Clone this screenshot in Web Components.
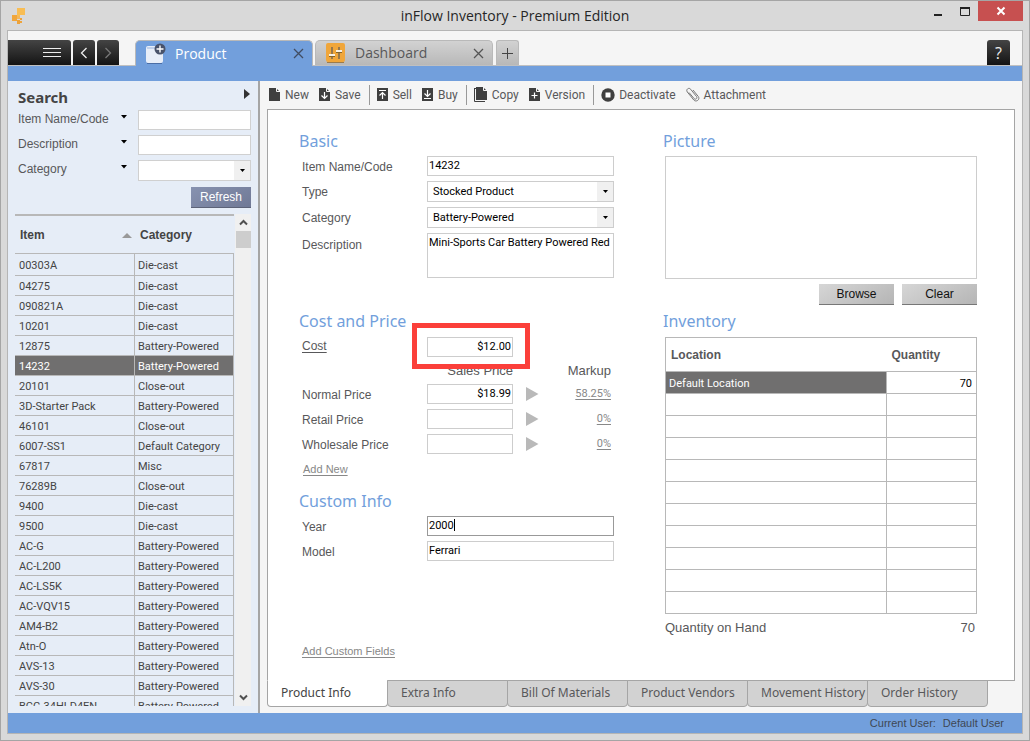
<!DOCTYPE html>
<html lang="en">
<head>
<meta charset="utf-8">
<title>inFlow Inventory - Premium Edition</title>
<style>
  html, body { margin: 0; height: 100%; }
  body {
    --blue: #729fdc;
    --line: #b8b8b8;
    --edge: #a5a5a5;
    --field: #cdcdcd;
    --ink: #58585a;
    --ui: "Open Sans", "Noto Sans", sans-serif;
    --head: "Noto Sans", "Open Sans", sans-serif;
    --data: Roboto, "Liberation Sans", sans-serif;
    font: 12px/16px "Liberation Sans", Arial, sans-serif;
    color: var(--ink);
  }
</style>
</head>
<body>
<app-window>
  <title-bar slot="title">inFlow Inventory - Premium Edition</title-bar>
  <tab-strip slot="tabs"></tab-strip>
  <search-panel slot="side"><item-list></item-list></search-panel>
  <tool-bar></tool-bar>
  <product-form></product-form>
  <page-tabs></page-tabs>
  <status-bar slot="status"><span>Current User:</span><span>Default User</span></status-bar>
</app-window>

<script>
const define = (name, html, setup) => {
  const template = document.createElement('template');
  template.innerHTML = html;
  customElements.define(name, class extends HTMLElement {
    constructor() {
      super();
      this.attachShadow({ mode: 'open' }).append(template.content.cloneNode(true));
    }
    connectedCallback() {
      if (setup && !this.ready) { this.ready = true; setup(this, this.shadowRoot); }
    }
  });
};
const reset = `*{box-sizing:border-box} button,input,select,textarea{font:inherit;color:inherit;margin:0;border-radius:0;outline:none} button{border:0;padding:0;background:none} svg{display:block}`;

/* ---- window frame ---- */
define('app-window', `<style>${reset}
  :host{display:flex;flex-direction:column;height:100vh;box-sizing:border-box;background:#d9d9d9;border:1px solid var(--edge);padding:0 6px 6px;overflow:hidden}
  .frame{flex:1;min-height:0;display:flex;flex-direction:column;border:1px solid #b5b5b5;background:#f5f5f5}
  .body{flex:1;min-height:0;display:flex}
  main{flex:1;min-width:0;display:flex;flex-direction:column;padding:0 7px 6px}
  </style>
  <slot name="title"></slot>
  <div class="frame"><slot name="tabs"></slot>
    <div class="body"><slot name="side"></slot><main><slot></slot></main></div>
    <slot name="status"></slot></div>`);

define('title-bar', `<style>${reset}
  :host{display:grid;grid-template-columns:1fr auto 1fr;height:29px;align-items:center;font:14px/20px var(--ui);color:#262626;margin-right:-6px}
  .logo{margin-left:4px}
  h1{font:inherit;margin:0 6px 0 0}
  .win{display:flex;justify-self:end;align-self:start;padding-right:6px}
  .win button{width:27px;height:20px;display:grid;place-items:center}
  .win .close{width:45px;background:#c75050}
  </style>
  <svg class="logo" width="16" height="18" viewBox="0 0 16 18"><path d="M6 1h8v7H9v2H6z" fill="#f8bd54"/><path d="M1 8h5v6H1z" fill="#f0a63c"/><path d="M6 9h3v3H6z" fill="#f4b75a"/><path d="M9 11h2v2H9zM6 13h3v4H6zM9 14h2v2H9z" fill="#eda33b"/></svg>
  <h1><slot></slot></h1>
  <div class="win">
    <button aria-label="Minimize"><svg width="10" height="10"><path d="M1 8h8v2H1z" fill="#222"/></svg></button>
    <button aria-label="Maximize"><svg width="10" height="10"><path d="M.5 2h9v7.500h-9z M0 2h10" fill="none" stroke="#222"/><path d="M0 1h10v2H0z" fill="#222"/></svg></button>
    <button class="close" aria-label="Close"><svg width="10" height="10"><path d="M1.500 1.500l7 7m0-7l-7 7" stroke="#fff" stroke-width="2"/></svg></button>
  </div>`);

/* ---- top tabs ---- */
define('tab-strip', `<style>${reset}
  :host{display:block;border-bottom:15px solid var(--blue)}
  nav{display:flex;align-items:flex-end;height:35px;padding:0 12px 0 0;border-bottom:1px solid #c0c0c0}
  button{display:grid;place-items:center;height:25px}
  .dark{background:linear-gradient(#444,#141414);width:22px;margin-right:2px;border-radius:3px 3px 0 0}
  .menu{width:63px;border-radius:0 3px 0 0;justify-items:end;padding-right:10px}
  .tab{display:flex;align-items:center;width:178px;height:25px;padding:0 8px 0 10px;font:14px/20px var(--ui);border-radius:5px 5px 0 0;border:1px solid #b9b9b9;border-bottom:0;background:linear-gradient(#d2d2d2,#b8b8b8);margin-right:3px}
  .tab a{flex:1;margin-left:10px;color:inherit;text-decoration:none}
  .tab.on{background:var(--blue);color:#fff;margin:0 2px -1px 14px;height:26px}
  .tab.on a{margin-left:9px}
  .tab button{height:12px;width:12px}
  .plus{width:23px;border:1px solid #b9b9b9;border-bottom:0;border-radius:3px 3px 0 0;background:linear-gradient(#d2d2d2,#b8b8b8)}
  .help{margin:0 0 0 auto;width:23px;color:#eee;font:16px/24px var(--ui)}
  </style>
  <nav>
    <button class="dark menu" aria-label="Menu"><svg width="18" height="11"><path d="M0 1.500h18M0 5.500h18M0 9.500h18" stroke="#eee"/></svg></button>
    <button class="dark" aria-label="Back"><svg width="8" height="12"><path d="M6.500 1l-5 5 5 5" fill="none" stroke="#eee" stroke-width="1.300"/></svg></button>
    <button class="dark" aria-label="Forward"><svg width="8" height="12"><path d="M1.500 1l5 5-5 5" fill="none" stroke="#777" stroke-width="1.300"/></svg></button>
    <div class="tab on">
      <svg width="20" height="21" viewBox="0 0 20 21"><path d="M0 5q0-2 2-2h15v15q0 2-2 2H2q-2 0-2-2z" fill="#e8eef8"/><path d="M1 5h11" stroke="#9bb4dc"/><path d="M1 20.500h15" stroke="#4b6ea6"/><circle cx="14" cy="6" r="5.500" fill="#49536b"/><path d="M14 2.500v7M10.500 6h7" stroke="#fff" stroke-width="1.400"/></svg>
      <a href="#product">Product</a>
      <button aria-label="Close Product"><svg width="11" height="11"><path d="M1 1l9 9m0-9l-9 9" stroke="#414d62" stroke-width="1.300"/></svg></button>
    </div>
    <div class="tab">
      <svg width="19" height="20" viewBox="0 0 19 20"><rect width="19" height="19" rx="2" fill="#f0a63a"/><path d="M1 19.500h17" stroke="#9b7b4c"/><path d="M6 4v12M13 4v12" stroke="#7a6a50" stroke-width="1.500"/><path d="M3 11h6v2H3zM10 7h6v2h-6z" fill="#f7f0e4"/><path d="M3 13.500h6M10 9.500h6" stroke="#846427"/></svg>
      <a href="#dashboard">Dashboard</a>
      <button aria-label="Close Dashboard"><svg width="11" height="11"><path d="M1 1l9 9m0-9l-9 9" stroke="#555" stroke-width="1.300"/></svg></button>
    </div>
    <button class="plus" aria-label="New tab"><svg width="11" height="11"><path d="M5.500 0v11M0 5.500h11" stroke="#444"/></svg></button>
    <button class="dark help" aria-label="Help">?</button>
  </nav>`);

/* ---- sidebar ---- */
define('search-panel', `<style>${reset}
  :host{display:flex;flex-direction:column;flex:0 0 252px;box-sizing:border-box;background:#e6edf7;border-right:2px solid var(--edge);padding:6px 7px 7px 7px}
  header{display:flex;align-items:center;justify-content:space-between;height:20px;padding-left:3px;color:#444}
  h2{margin:0;font:bold 15px/20px var(--head)}
  header button{margin:-7px 1px 0 0}
  form{display:grid;grid-template-columns:103px 17px 113px;row-gap:5px;padding-left:3px;margin-top:3px}
  label{line-height:18px}
  .drop{margin-top:5px;height:4px;width:7px;display:block}
  input,.sel{height:20px;width:100%;border:1px solid #d0d0d0;background:#fff}
  .sel{height:21px;display:grid}
  .sel>*{grid-area:1/1}
  select{appearance:none;border:0;background:none;width:100%;padding:0}
  .sel i{justify-self:end;width:16px;background:#f0f0f0;display:grid;place-items:center;pointer-events:none}
  .go{grid-column:3;justify-self:end;width:60px;height:21px;margin-top:1px;background:linear-gradient(150deg,#8792b0,#707996);border-bottom:1px solid #5d6378;color:#fff}
  ::slotted(*){flex:1;min-height:0;margin-top:6px}
  </style>
  <header><h2>Search</h2><button aria-label="Collapse"><svg width="6" height="10"><path d="M0 0l6 5-6 5z" fill="#333"/></svg></button></header>
  <form>
    <label for="n">Item Name/Code</label><button type="button" class="drop" aria-label="Name options"><svg width="6" height="4"><path d="M0 0h6L3 3.500z"/></svg></button><input id="n">
    <label for="d">Description</label><button type="button" class="drop" aria-label="Description options"><svg width="6" height="4"><path d="M0 0h6L3 3.500z"/></svg></button><input id="d">
    <label for="c">Category</label><button type="button" class="drop" aria-label="Category options"><svg width="6" height="4"><path d="M0 0h6L3 3.500z"/></svg></button>
    <div class="sel"><select id="c"><option></option></select><i><svg width="5" height="3"><path d="M0 0h5L2.500 3z"/></svg></i></div>
    <button type="button" class="go">Refresh</button>
  </form>
  <slot></slot>`);

define('item-list', `<style>${reset}
  :host{display:flex;overflow:hidden;color:#444}
  .view{flex:1;overflow:hidden;border-top:2px solid var(--line)}
  table{width:100%;border-collapse:separate;border-spacing:0;table-layout:fixed}
  th{height:38px;text-align:left;padding:0 5px;border-bottom:1px solid var(--line)}
  th svg{float:right;margin:6px -2px 0 0}
  td{height:20px;font:11px/16px var(--data);padding:2px 3px 0;border-right:1px solid var(--line);border-bottom:1px solid var(--line);white-space:nowrap}
  td:first-child{padding-left:4px}
  tr:first-child td{height:22px}
  .on td{background:#706f6f;color:#fff}
  .bar{width:16px;margin-left:1px;background:#f0f0f0;display:flex;flex-direction:column;align-items:center}
  .bar button{height:17px;width:16px;display:grid;place-items:center}
  .thumb{width:15px;height:17px;background:#cdcdcd;margin-bottom:auto}
  </style>
  <div class="view"><table><colgroup><col style="width:120px"><col></colgroup>
    <thead><tr><th>Item <svg width="10" height="5"><path d="M5 0l5 5H0z" fill="#999"/></svg></th><th>Category</th></tr></thead><tbody></tbody></table></div>
  <div class="bar"><button aria-label="Scroll up"><svg width="9" height="7"><path d="M1 5.500L4.500 2 8 5.500" fill="none" stroke="#505050" stroke-width="2"/></svg></button><div class="thumb"></div>
  <button aria-label="Scroll down"><svg width="9" height="7"><path d="M1 1.500L4.500 5 8 1.500" fill="none" stroke="#505050" stroke-width="2"/></svg></button></div>`,
  (host, root) => {
    const B = 'Battery-Powered', D = 'Die-cast', C = 'Close-out';
    const items = [['00303A', D], ['04275', D], ['090821A', D], ['10201', D], ['12875', B], ['14232', B], ['20101', C],
      ['3D-Starter Pack', B], ['46101', C], ['6007-SS1', 'Default Category'], ['67817', 'Misc'], ['76289B', C], ['9400', D],
      ['9500', D], ['AC-G', B], ['AC-L200', B], ['AC-LS5K', B], ['AC-VQV15', B], ['AM4-B2', B], ['Atn-O', B], ['AVS-13', B],
      ['AVS-30', B], ['BCG-34HLD4EN', B]];
    root.querySelector('tbody').innerHTML = items.map(([n, c]) =>
      `<tr${n === '14232' ? ' class="on"' : ''}><td>${n}</td><td>${c}</td></tr>`).join('');
  });

/* ---- toolbar ---- */
const page = 'M0 0h7l4 4v9H0z', fold = '<path d="M7.500 0v3.500H11" fill="none" stroke="#f5f5f5"/>';
const icons = {
  New: `<svg width="12" height="13"><path d="${page}" fill="#3f3f3f"/>${fold}</svg>`,
  Save: `<svg width="12" height="13"><path d="${page}" fill="#3f3f3f"/>${fold}<path d="M5.500 4v6M2.500 7.500l3 3 3-3" fill="none" stroke="#fff" stroke-width="1.200"/></svg>`,
  Sell: `<svg width="12" height="13"><path d="M0 0h11v13H0z" fill="#3f3f3f"/><path d="M2 2.500h7M5.500 5v6M2.500 7.500l3-3 3 3" fill="none" stroke="#fff" stroke-width="1.200"/></svg>`,
  Buy: `<svg width="12" height="13"><path d="M0 0h11v13H0z" fill="#3f3f3f"/><path d="M2 10.500h7M5.500 2v6M2.500 5.500l3 3 3-3" fill="none" stroke="#fff" stroke-width="1.200"/></svg>`,
  Copy: `<svg width="14" height="15"><path d="M.5 1v13.500H11M.5 1.500H3" fill="none" stroke="#3f3f3f"/><path d="M2 0h7l4 4v9H2z" fill="#3f3f3f"/><path d="M9.500 0v3.500H13" fill="none" stroke="#f5f5f5"/></svg>`,
  Version: `<svg width="12" height="13"><path d="${page}" fill="#3f3f3f"/>${fold}<path d="M5.500 4.500v6M2.500 7.500h6" stroke="#fff" stroke-width="1.200"/></svg>`,
  Deactivate: `<svg width="14" height="14"><circle cx="7" cy="7" r="6.700" fill="#3f3f3f"/><rect x="4.500" y="4.500" width="5" height="5" fill="#fff"/></svg>`,
  Attachment: `<svg width="14" height="15" viewBox="0 0 14 15"><path d="M3 5.500l5 6c1.500 1.700 3.900-.2 2.500-2L4.700 2.300C3-.1-.6 2.500 1.300 5l6.500 8c2.200 2.500 6.700-.3 4.500-3.500L7 3" fill="none" stroke="#777"/></svg>`
};
define('tool-bar', `<style>${reset}
  :host{display:flex;align-items:center;height:28px;font:12px/16px var(--data);padding-left:2px}
  button{display:flex;align-items:center;gap:4px;margin-right:10px}
  button svg{margin-top:-1px}
  .end{margin-right:8px}
  i{width:1px;height:20px;background:#999;margin-right:7px}
  </style>`, (host, root) => {
    const cut = ['Save', 'Buy', 'Version'];
    root.innerHTML += Object.keys(icons).map(n =>
      `<button class="${cut.includes(n) ? 'end' : ''}">${icons[n]}${n}</button>${cut.includes(n) ? '<i></i>' : ''}`).join('');
  });

/* ---- form pieces ---- */
define('form-section', `<style>
  :host{display:block}
  h2{margin:0;font:16px/20px var(--head);color:var(--blue)}
  div{display:grid;row-gap:5px;margin-top:var(--head-gap,5px)}
  </style><h2></h2><div><slot></slot></div>`,
  (host, root) => { root.querySelector('h2').textContent = host.getAttribute('heading'); });

/* kind: text | select | area | money */
define('form-field', `<style>${reset}
  :host{display:grid;grid-template-columns:128px minmax(0,1fr);color:var(--ink)}
  label{padding:2px 0 0 3px;line-height:18px}
  .link{text-decoration:underline;text-underline-offset:2px;padding-top:0}
  .box{position:relative;display:grid;font:11px/16px var(--data);color:#000}
  .box>*{grid-area:1/1}
  input,textarea,select{width:100%;height:20px;padding:0 1px 2px;border:1px solid var(--field);background:#fff}
  textarea{height:45px;resize:none;padding-top:1px;line-height:16px;display:block}
  select{height:21px;appearance:none;padding:0 5px}
  .arrow{justify-self:end;width:16px;margin:1px;background:#f0f0f0;display:grid;place-items:center;pointer-events:none}
  :host([active]) input{border-color:#999}
  .caret{position:absolute;left:27px;top:3px;width:1px;height:12px;background:#000}
  :host([kind=money]) .wrap{display:grid;grid-template-columns:86px 26px 1fr;align-items:center;padding-right:3px}
  :host([kind=money]) input{text-align:right}
  .tri{margin-left:13px}
  a{justify-self:end;color:#888;font:11px/16px var(--data);text-underline-offset:2px}
  .ring{position:absolute;inset:-14px -17px -12px -15px;border:5px solid #fb3f3a;pointer-events:none;z-index:1}
  </style><label for="f"></label><div class="wrap"><div class="box"></div></div>`,
  (host, root) => {
    const get = n => host.getAttribute(n) || '';
    const label = root.querySelector('label'), box = root.querySelector('.box'), kind = get('kind');
    label.textContent = get('label');
    const value = get('value');
    if (kind === 'select')
      box.innerHTML = `<select id="f"><option>${value}</option></select><span class="arrow"><svg width="5" height="3"><path d="M0 0h5L2.500 3z"/></svg></span>`;
    else if (kind === 'area') { label.style.paddingTop = '3px'; box.innerHTML = `<textarea id="f">${value}</textarea>`; }
    else box.innerHTML = `<input id="f" value="${value}">`;
    if (host.hasAttribute('active')) box.innerHTML += '<span class="caret"></span>';
    if (host.hasAttribute('ring')) { box.innerHTML += '<span class="ring"></span>'; label.className = 'link'; }
    if (get('markup')) box.insertAdjacentHTML('afterend',
      `<svg class="tri" width="13" height="14"><path d="M0 0l12.500 7L0 14z" fill="#b9b9b9"/></svg><a href="#markup">${get('markup')}</a>`);
  });

define('picture-box', `<style>${reset}
  :host{display:block;padding-left:2px;color:#222}
  .pic{height:123px;border:1px solid var(--field)}
  .row{display:flex;justify-content:flex-end;gap:8px;margin-top:5px}
  button{width:75px;height:21px;background:linear-gradient(150deg,#d6d6d6,#b5b5b5);border-bottom:1px solid #777;color:#111}
  </style><div class="pic"></div><div class="row"><button>Browse</button><button>Clear</button></div>`);

define('inventory-table', `<style>${reset}
  :host{display:block;padding-left:2px}
  table{width:100%;border-collapse:collapse;table-layout:fixed;border:1px solid var(--line);color:#000}
  th{height:34px;text-align:left;padding:0 5px;color:var(--ink)}
  td{height:22px;border:1px solid var(--line);padding:2px 4px 0 3px;font:11px/16px var(--data)}
  td+td{text-align:right}
  td.on{background:#706f6f;color:#fff}
  dl{display:flex;justify-content:space-between;margin:4px 2px 0 0;font-size:13px;line-height:20px}
  dd{margin:0}
  </style>
  <table><colgroup><col><col style="width:90px"></colgroup><thead><tr><th>Location</th><th>Quantity</th></tr></thead>
  <tbody><tr><td class="on">Default Location</td><td>70</td></tr></tbody></table>
  <dl><dt>Quantity on Hand</dt><dd>70</dd></dl>`,
  (host, root) => { root.querySelector('tbody').insertAdjacentHTML('beforeend', '<tr><td></td><td></td></tr>'.repeat(10)); });

define('product-form', `<style>${reset}
  :host{display:grid;flex:1;min-height:0;grid-template-columns:minmax(0,1fr) 314px;column-gap:49px;background:#fff;border:1px solid var(--edge);padding:21px 37px 0 31px}
  .left,.right{display:flex;flex-direction:column}
  .cost{margin-top:33px;--head-gap:6px}
  .cols{display:grid;grid-template-columns:214px 1fr;justify-items:end;font-size:13px;line-height:20px;margin:-1px 3px -2px 0}
  a{color:#888;font-size:11px;text-underline-offset:2px;justify-self:start}
  .new{margin:2px 0 0 4px}
  .custom{margin-top:14px}
  .more{margin:82px 0 0 3px;align-self:flex-start}
  .inv{margin-top:6px;--head-gap:6px}
  </style>
  <div class="left">
    <form-section heading="Basic">
      <form-field label="Item Name/Code" value="14232"></form-field>
      <form-field label="Type" kind="select" value="Stocked Product"></form-field>
      <form-field label="Category" kind="select" value="Battery-Powered"></form-field>
      <form-field label="Description" kind="area" value="Mini-Sports Car Battery Powered Red"></form-field>
    </form-section>
    <form-section heading="Cost and Price" class="cost">
      <form-field label="Cost" kind="money" value="$12.00" ring></form-field>
      <div class="cols"><span>Sales Price</span><span>Markup</span></div>
      <form-field label="Normal Price" kind="money" value="$18.99" markup="58.25%"></form-field>
      <form-field label="Retail Price" kind="money" markup="0%"></form-field>
      <form-field label="Wholesale Price" kind="money" markup="0%"></form-field>
      <a class="new" href="#add-price">Add New</a>
    </form-section>
    <form-section heading="Custom Info" class="custom">
      <form-field label="Year" value="2000" active></form-field>
      <form-field label="Model" value="Ferrari"></form-field>
    </form-section>
    <a class="more" href="#custom-fields">Add Custom Fields</a>
  </div>
  <div class="right">
    <form-section heading="Picture"><picture-box></picture-box></form-section>
    <form-section heading="Inventory" class="inv"><inventory-table></inventory-table></form-section>
  </div>`);

/* ---- bottom tabs and status ---- */
define('page-tabs', `<style>${reset}
  :host{display:flex;font:12px/16px var(--head);margin-top:-1px;position:relative}
  a{flex:0 1 121px;height:27px;margin-right:-1px;padding:4px 0 0 13px;color:inherit;text-decoration:none;white-space:nowrap;background:#d2d2d2;border:1px solid var(--edge);border-radius:0 0 4px 4px}
  a.on{background:#fff;border-top-color:#fff;color:#444}
  </style>`, (host, root) => {
    root.innerHTML += ['Product Info', 'Extra Info', 'Bill Of Materials', 'Product Vendors', 'Movement History', 'Order History']
      .map((t, i) => `<a href="#tab${i}"${i ? '' : ' class="on"'}>${t}</a>`).join('');
  });

define('status-bar', `<style>
  :host{display:flex;justify-content:flex-end;gap:7px;height:20px;background:var(--blue);font-size:11px;line-height:20px;padding-right:18px;color:#3f4854}
  </style><slot></slot>`);
</script>
</body>
</html>
